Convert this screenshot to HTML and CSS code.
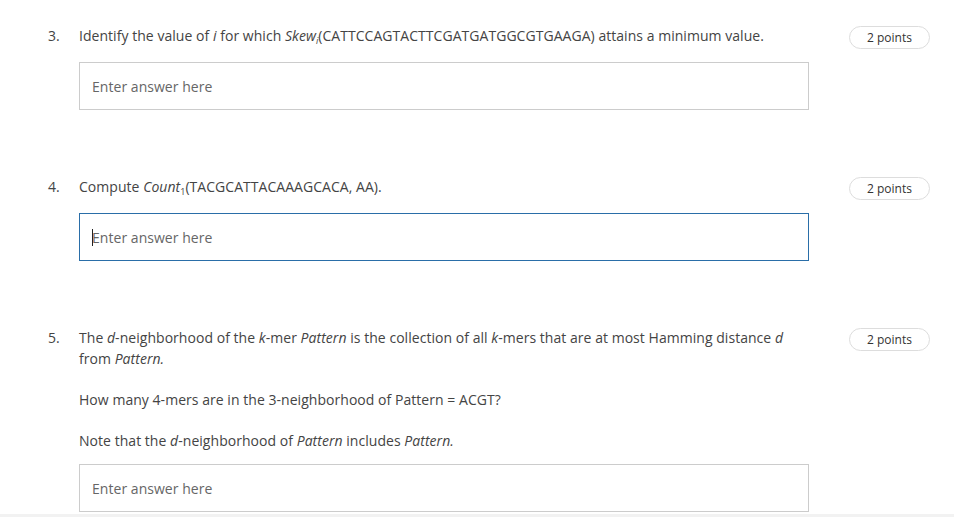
FILE: index.html
```html
<!DOCTYPE html>
<html>
<head>
<meta charset="utf-8">
<link rel="stylesheet" href="styles.css">
</head>
<body>
<div class="page">
  <div class="question">
    <div class="num">3.</div>
    <div class="content">
      <p>Identify the value of <i>i</i> for which <i>Skew<sub>i</sub></i>(CATTCCAGTACTTCGATGATGGCGTGAAGA) attains a minimum value.</p>
      <div class="answer"><span class="ph">Enter answer here</span></div>
    </div>
    <div class="badge">2 points</div>
  </div>
  <div class="question">
    <div class="num">4.</div>
    <div class="content">
      <p>Compute <i>Count</i><sub>1</sub>(TACGCATTACAAAGCACA, AA).</p>
      <div class="answer focused"><span class="caret"></span><span class="ph">Enter answer here</span></div>
    </div>
    <div class="badge">2 points</div>
  </div>
  <div class="question last">
    <div class="num">5.</div>
    <div class="content">
      <p>The <i>d</i>-neighborhood of the <i>k</i>-mer <i>Pattern</i> is the collection of all <i>k</i>-mers that are at most Hamming distance <i>d</i> from <i>Pattern.</i></p>
      <p>How many 4-mers are in the 3-neighborhood of Pattern = ACGT?</p>
      <p>Note that the <i>d</i>-neighborhood of <i>Pattern</i> includes <i>Pattern.</i></p>
      <div class="answer tight"><span class="ph">Enter answer here</span></div>
    </div>
    <div class="badge">2 points</div>
  </div>
  <div class="strip"></div>
</div>
</body>
</html>
```

FILE: styles.css
```css
html, body {
  margin: 0;
  padding: 0;
  background: #fff;
}
body {
  font-family: "Open Sans", "Liberation Sans", sans-serif;
  font-size: 14px;
  letter-spacing: 0.04px;
  color: #444;
  overflow: hidden;
}
.page {
  padding-top: 25px;
}
.question {
  display: flex;
  align-items: flex-start;
  padding-left: 48px;
  padding-right: 24px;
  margin-bottom: 66px;
}
.question.last {
  margin-bottom: 2px;
}
.num {
  width: 31px;
  line-height: 21px;
  flex-shrink: 0;
}
.content {
  width: 730px;
  display: flex;
  flex-direction: column;
  gap: 20px;
}
.content p {
  margin: 0;
  line-height: 21px;
}
sub {
  font-size: 9px;
  line-height: 0;
  vertical-align: -3px;
  font-style: normal;
}
i sub {
  font-style: italic;
}
.answer {
  box-sizing: border-box;
  height: 48px;
  border: 1px solid #ccc;
  display: flex;
  align-items: center;
  padding-left: 12px;
  margin-top: -4px;
}
.answer.tight {
  margin-top: -7px;
}
.answer.focused {
  border-color: #2a6ea8;
}
.ph {
  color: #666;
}
.caret {
  display: inline-block;
  width: 1px;
  height: 17px;
  background: #222;
  margin-right: -1px;
}
.badge {
  margin-left: auto;
  margin-top: 1px;
  box-sizing: border-box;
  width: 81px;
  height: 23px;
  border: 1px solid #ddd;
  border-radius: 12px;
  font-size: 12px;
  letter-spacing: 0;
  line-height: 21px;
  text-align: center;
  color: #333;
}
.strip {
  height: 10px;
  background: #f2f2f2;
}
```
